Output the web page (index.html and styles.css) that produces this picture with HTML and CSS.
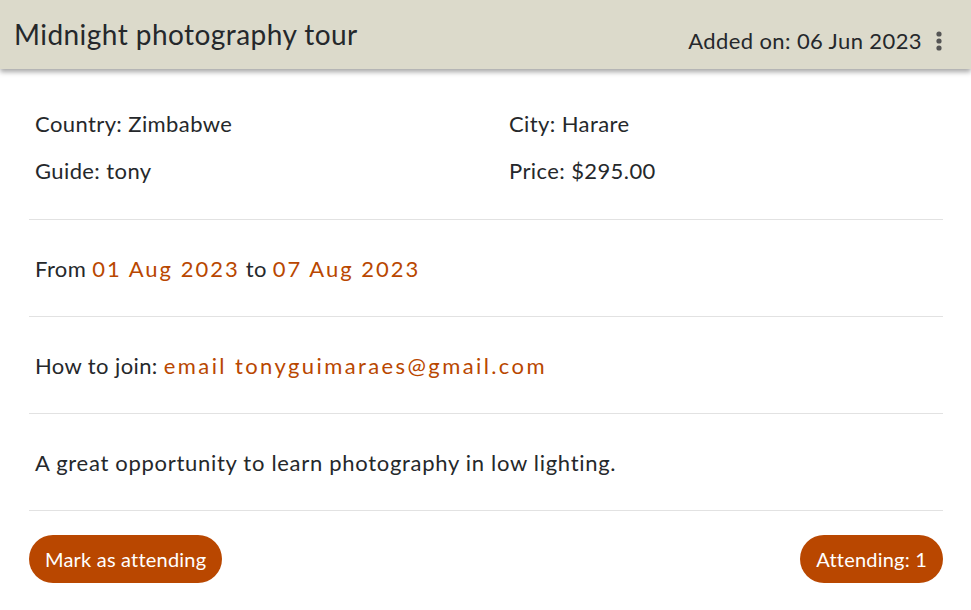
FILE: index.html
```html
<!DOCTYPE html>
<html>
<head>
<meta charset="utf-8">
<link rel="stylesheet" href="styles.css">
</head>
<body>
<div class="card">
  <header class="head">
    <h1 class="title">Midnight photography tour</h1>
    <div class="meta">
      <span class="added">Added on: 06 Jun 2023</span>
      <svg class="dots" width="6" height="22" viewBox="0 0 6 22"><circle cx="3" cy="4" r="2.6" fill="#555"/><circle cx="3" cy="11" r="2.6" fill="#555"/><circle cx="3" cy="18" r="2.6" fill="#555"/></svg>
    </div>
  </header>
  <main class="body">
    <section class="sec info">
      <div class="cell">Country: Zimbabwe</div>
      <div class="cell">City: Harare</div>
      <div class="cell">Guide: tony</div>
      <div class="cell">Price: $295.00</div>
    </section>
    <section class="sec row">From <span class="accent date">01 Aug 2023</span> to <span class="accent date">07 Aug 2023</span></section>
    <section class="sec row">How to join: <span class="accent mail">email tonyguimaraes@gmail.com</span></section>
    <section class="sec row desc">A great opportunity to learn photography in low lighting.</section>
    <footer class="actions">
      <button class="btn">Mark as attending</button>
      <button class="btn">Attending: 1</button>
    </footer>
  </main>
</div>
</body>
</html>
```
FILE: styles.css
```css
html, body { margin: 0; padding: 0; background: #fff; }
body { font-family: "Lato", "Open Sans", sans-serif; color: #25282b; }
.card { width: 971px; }
.head {
  height: 69px;
  background: #dcdacb;
  box-shadow: 0 3px 5px rgba(0,0,0,0.35);
  display: flex;
  justify-content: space-between;
  align-items: flex-start;
  padding: 0 29px 0 14px;
  box-sizing: border-box;
  position: relative;
}
.title { margin: 0; font-weight: 400; font-size: 28px; line-height: 1; padding-top: 20px; letter-spacing: 0.45px; }
.meta { display: flex; align-items: center; gap: 14px; padding-top: 30px; }
.added { font-size: 22px; line-height: 1; letter-spacing: 0.4px; }
.dots { display: block; }
.body { padding: 0 28px 0 29px; }
.sec { border-bottom: 1px solid #e2e2e2; padding: 0 6px; font-size: 22px; letter-spacing: 0.4px; }
.info {
  display: grid; grid-template-columns: 474px 1fr; row-gap: 22px;
  padding-top: 42px; padding-bottom: 36px; height: 151px; box-sizing: border-box;
  align-content: start;
}
.cell { line-height: 25px; }
.row { height: 97px; box-sizing: border-box; display: flex; align-items: center; white-space: pre; }
.desc { letter-spacing: 0.7px; }
.accent { color: #b94700; }
.date { letter-spacing: 2px; }
.mail { letter-spacing: 2.4px; }
.actions { display: flex; justify-content: space-between; padding-top: 24px; }
.btn {
  font-family: inherit; font-size: 20px; color: #fff; letter-spacing: 0.2px;
  background: #b94700; border: 0; border-radius: 24px;
  height: 48px; padding: 0 16px; cursor: pointer;
}
```
